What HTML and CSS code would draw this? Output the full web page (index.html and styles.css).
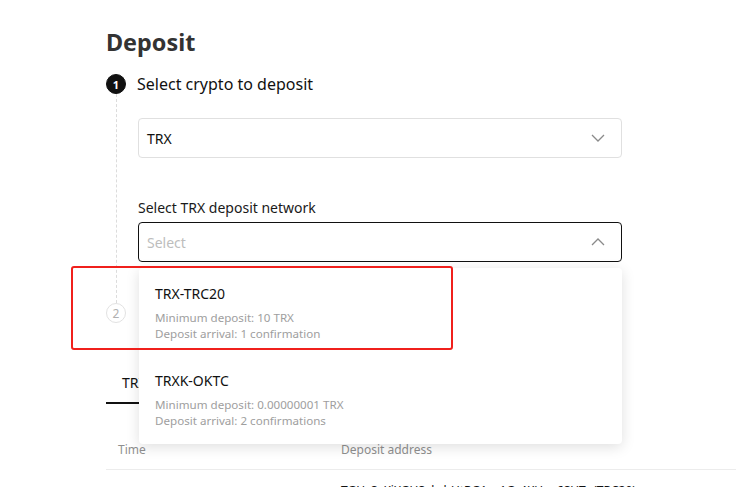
FILE: index.html
```html
<!DOCTYPE html>
<html lang="en">
<head>
<meta charset="utf-8">
<title>Deposit</title>
<link rel="stylesheet" href="styles.css">
</head>
<body>
<main class="page">
  <h1 class="title">Deposit</h1>

  <section class="step">
    <div class="step-head">
      <span class="step-num active">1</span>
      <span class="step-title">Select crypto to deposit</span>
    </div>
    <div class="step-body">
      <div class="select">
        <span class="select-value">TRX</span>
        <svg class="chev" width="14" height="8" viewBox="0 0 14 8"><path d="M1 1l6 6 6-6" fill="none" stroke="#8a8a8a" stroke-width="1.3"/></svg>
      </div>
      <div class="field-label">Select TRX deposit network</div>
      <div class="select-wrap">
        <div class="select open">
          <span class="select-placeholder">Select</span>
          <svg class="chev" width="14" height="8" viewBox="0 0 14 8"><path d="M1 7l6-6 6 6" fill="none" stroke="#8a8a8a" stroke-width="1.3"/></svg>
        </div>
        <div class="dropdown">
          <div class="option">
            <div class="option-title">TRX-TRC20</div>
            <div class="option-sub">Minimum deposit: 10 TRX</div>
            <div class="option-sub">Deposit arrival: 1 confirmation</div>
          </div>
          <div class="option">
            <div class="option-title">TRXK-OKTC</div>
            <div class="option-sub">Minimum deposit: 0.00000001 TRX</div>
            <div class="option-sub">Deposit arrival: 2 confirmations</div>
          </div>
        </div>
        <div class="highlight"></div>
      </div>
    </div>
  </section>

  <section class="step last">
    <div class="step-head">
      <span class="step-num">2</span>
    </div>
  </section>

  <nav class="tabs">
    <span class="tab current">TRX deposits</span>
  </nav>

  <div class="table">
    <div class="row head">
      <span class="cell">Time</span>
      <span class="cell">Deposit address</span>
    </div>
    <div class="row">
      <span class="cell"></span>
      <span class="cell addr">TGHzSvKiXGUSxhrhUtRG1ru1Gr4KUxn6SUTr (TRC20)</span>
    </div>
  </div>
</main>
</body>
</html>
```

FILE: styles.css
```css
html, body {
  margin: 0;
  padding: 0;
  background: #fff;
  overflow: hidden;
  height: 487px;
}

body {
  font-family: "Noto Sans", "Open Sans", "Liberation Sans", sans-serif;
  color: #111;
}

.page {
  padding: 28px 0 0 106px;
  width: 736px;
  box-sizing: border-box;
  overflow: hidden;
}

.title {
  margin: 0;
  font-size: 23.4px;
  line-height: 28px;
  font-weight: 700;
  color: #333;
}

.step {
  margin-top: 18px;
}

.step.last {
  margin-top: 0;
}

.step-head {
  display: flex;
  align-items: center;
  gap: 11px;
  height: 20px;
}

.step-num {
  width: 20px;
  height: 20px;
  box-sizing: border-box;
  border-radius: 50%;
  display: flex;
  align-items: center;
  justify-content: center;
  font-size: 11px;
  font-weight: 700;
  border: 1px solid #e2e2e2;
  color: #b0b0b0;
  background: #fff;
  flex: none;
}

.step-num.active {
  background: #111;
  border-color: #111;
  color: #fff;
}

.step-num:not(.active) {
  font-weight: 400;
  font-size: 12px;
}

.step-title {
  font-size: 16px;
  line-height: 20px;
  color: #111;
}

.step-body {
  margin-left: 10px;
  border-left: 1px dashed #dcdcdc;
  padding: 24px 0 41px 21px;
  width: 484px;
}

.select {
  height: 40px;
  box-sizing: border-box;
  border: 1px solid #e0e0e0;
  border-radius: 4px;
  display: flex;
  align-items: center;
  justify-content: space-between;
  padding: 0 16px 0 8px;
  font-size: 14px;
}

.select.open {
  border: 1.5px solid #111;
}

.select-value {
  color: #111;
}

.select-placeholder {
  color: #bdbdbd;
}

.chev {
  display: block;
}

.field-label {
  margin-top: 40px;
  font-size: 14px;
  line-height: 20px;
  color: #1a1a1a;
  margin-bottom: 4px;
}

.select-wrap {
  position: relative;
}

.dropdown {
  position: absolute;
  top: 46px;
  left: 1px;
  width: 483px;
  box-sizing: border-box;
  background: #fff;
  border-radius: 4px;
  box-shadow: 0 3px 14px rgba(0, 0, 0, 0.13);
  padding: 4px 0 3px;
  display: flex;
  flex-direction: column;
  gap: 5px;
  z-index: 5;
}

.option {
  padding: 12px 16px;
}

.option-title {
  font-size: 14px;
  line-height: 20px;
  color: #111;
  margin-bottom: 6px;
}

.option-sub {
  font-size: 11.6px;
  line-height: 16px;
  color: #9e9e9e;
}

.highlight {
  position: absolute;
  left: -67px;
  top: 44px;
  width: 382px;
  height: 84px;
  box-sizing: border-box;
  border: 2px solid #f0201c;
  border-radius: 3px;
  z-index: 6;
}

.tabs {
  margin-top: 50px;
  display: flex;
}

.tab {
  font-size: 14px;
  line-height: 20px;
  padding: 0 16px 9px;
  color: #111;
  border-bottom: 2px solid #111;
  white-space: nowrap;
}

.table {
  margin-top: 25px;
  width: 100%;
}

.row {
  display: grid;
  grid-template-columns: 223px 1fr;
}

.row.head {
  height: 40px;
  align-items: center;
  border-bottom: 1px solid #ececec;
}

.row.head .cell {
  font-size: 12px;
  color: #8f8f8f;
  padding-left: 12px;
}

.cell.addr {
  padding: 12px 0 0 12px;
  font-size: 12px;
  color: #111;
  white-space: nowrap;
}
```
